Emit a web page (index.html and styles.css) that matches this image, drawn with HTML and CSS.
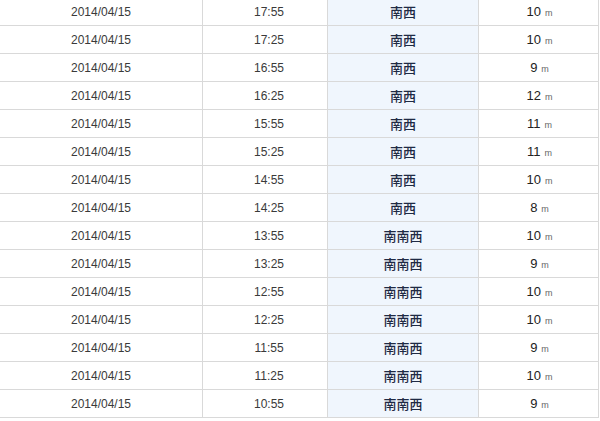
FILE: index.html
```html
<!DOCTYPE html>
<html lang="ja">
<head>
<meta charset="utf-8">
<link rel="stylesheet" href="styles.css">
</head>
<body>
<table class="obs">
<tbody>
<tr><td class="date">2014/04/15</td><td class="time">17:55</td><td class="dir">南西</td><td class="val">10<span class="unit">m</span></td></tr>
<tr><td class="date">2014/04/15</td><td class="time">17:25</td><td class="dir">南西</td><td class="val">10<span class="unit">m</span></td></tr>
<tr><td class="date">2014/04/15</td><td class="time">16:55</td><td class="dir">南西</td><td class="val">9<span class="unit">m</span></td></tr>
<tr><td class="date">2014/04/15</td><td class="time">16:25</td><td class="dir">南西</td><td class="val">12<span class="unit">m</span></td></tr>
<tr><td class="date">2014/04/15</td><td class="time">15:55</td><td class="dir">南西</td><td class="val">11<span class="unit">m</span></td></tr>
<tr><td class="date">2014/04/15</td><td class="time">15:25</td><td class="dir">南西</td><td class="val">11<span class="unit">m</span></td></tr>
<tr><td class="date">2014/04/15</td><td class="time">14:55</td><td class="dir">南西</td><td class="val">10<span class="unit">m</span></td></tr>
<tr><td class="date">2014/04/15</td><td class="time">14:25</td><td class="dir">南西</td><td class="val">8<span class="unit">m</span></td></tr>
<tr><td class="date">2014/04/15</td><td class="time">13:55</td><td class="dir">南南西</td><td class="val">10<span class="unit">m</span></td></tr>
<tr><td class="date">2014/04/15</td><td class="time">13:25</td><td class="dir">南南西</td><td class="val">9<span class="unit">m</span></td></tr>
<tr><td class="date">2014/04/15</td><td class="time">12:55</td><td class="dir">南南西</td><td class="val">10<span class="unit">m</span></td></tr>
<tr><td class="date">2014/04/15</td><td class="time">12:25</td><td class="dir">南南西</td><td class="val">10<span class="unit">m</span></td></tr>
<tr><td class="date">2014/04/15</td><td class="time">11:55</td><td class="dir">南南西</td><td class="val">9<span class="unit">m</span></td></tr>
<tr><td class="date">2014/04/15</td><td class="time">11:25</td><td class="dir">南南西</td><td class="val">10<span class="unit">m</span></td></tr>
<tr><td class="date">2014/04/15</td><td class="time">10:55</td><td class="dir">南南西</td><td class="val">9<span class="unit">m</span></td></tr>
</tbody>
</table>
</body>
</html>
```

FILE: styles.css
```css
html, body {
  margin: 0;
  padding: 0;
  background: #ffffff;
}

body {
  font-family: "Liberation Sans", "Noto Sans CJK JP", sans-serif;
  font-size: 12px;
  color: #3a3a3a;
}

.obs {
  border-collapse: collapse;
  width: 599px;
  margin-top: -2px;
  table-layout: fixed;
}

.obs td {
  height: 26px;
  padding: 1px 0 0 0;
  text-align: center;
  vertical-align: middle;
  border-bottom: 1px solid #d9d9d9;
  border-right: 1px solid #d9d9d9;
  line-height: 16px;
}

.obs td.date {
  width: 202px;
}

.obs td.time {
  width: 116px;
  padding-left: 8px;
}

.obs td.dir {
  width: 150px;
  background: #f0f6fd;
  font-family: "Noto Sans CJK JP", sans-serif;
  font-size: 13px;
  font-weight: 500;
  color: #1f2a44;
}

.obs td.val {
  font-size: 13px;
  color: #222222;
  padding-left: 2px;
}

.unit {
  font-size: 9px;
  color: #666666;
  margin-left: 4px;
}
```
